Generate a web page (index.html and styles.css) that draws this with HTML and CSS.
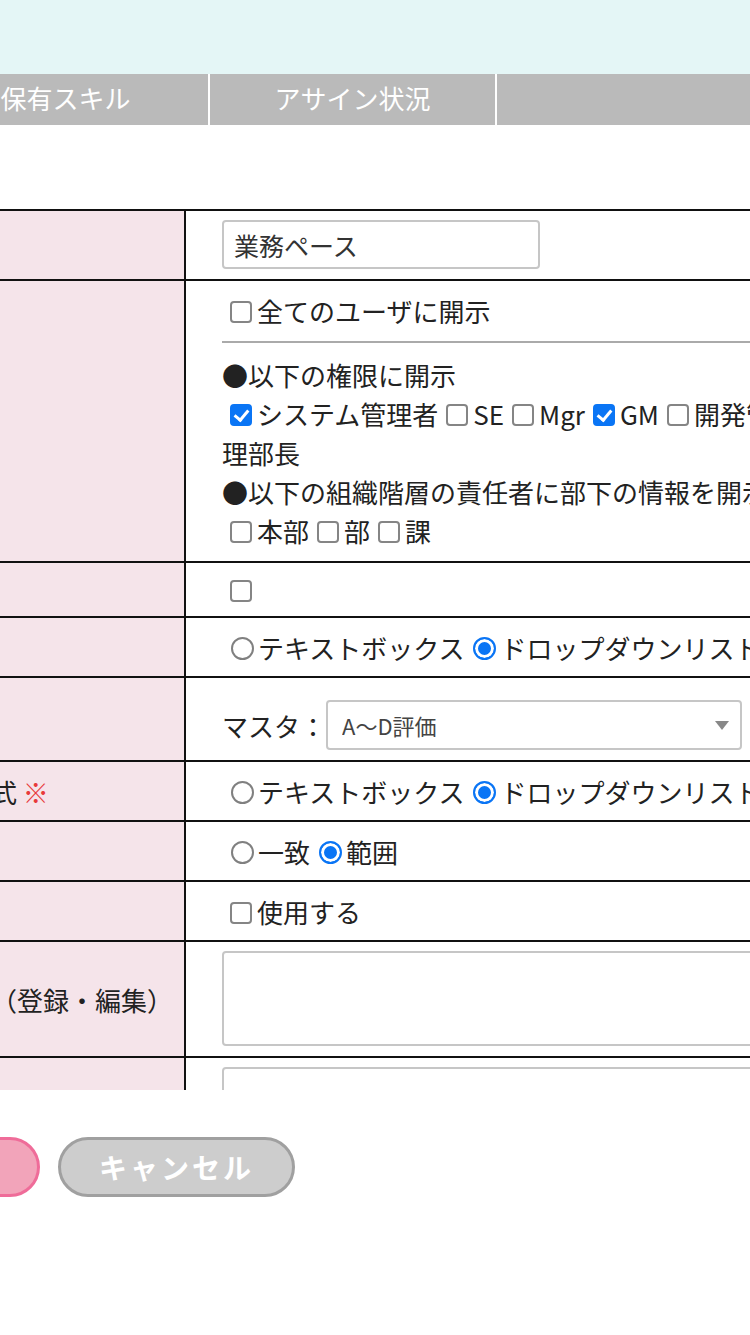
FILE: index.html
```html
<!DOCTYPE html>
<html lang="ja">
<head>
<meta charset="utf-8">
<title>項目設定</title>
<link rel="stylesheet" href="styles.css">
</head>
<body>
<div class="band"></div>
<div class="viewport">
  <div class="page">
    <nav class="tabs">
      <div class="tab">基本情報</div>
      <div class="tab">保有スキル</div>
      <div class="tab">アサイン状況</div>
      <div class="tab"></div>
    </nav>
    <div class="table-wrap">
      <table class="form">
        <colgroup><col class="c-label"><col class="c-value"></colgroup>
        <tr class="r-input">
          <th>項目名</th>
          <td><input class="text" type="text" value="業務ペース"></td>
        </tr>
        <tr class="r-open">
          <th>開示先</th>
          <td>
            <label><input type="checkbox">全てのユーザに開示</label>
            <hr class="sep">
            <div>●以下の権限に開示</div>
            <div><label><input type="checkbox" checked>システム管理者</label><label><input type="checkbox">SE</label><label><input type="checkbox">Mgr</label><label><input type="checkbox" checked>GM</label><label><input type="checkbox">開発管理部長</label></div>
            <div>●以下の組織階層の責任者に部下の情報を開示</div>
            <div><label><input type="checkbox">本部</label><label><input type="checkbox">部</label><label><input type="checkbox">課</label></div>
          </td>
        </tr>
        <tr class="r-check">
          <th>必須</th>
          <td><input type="checkbox"></td>
        </tr>
        <tr>
          <th>入力欄</th>
          <td><label><input type="radio" name="t1">テキストボックス</label><label><input type="radio" name="t1" checked>ドロップダウンリスト</label></td>
        </tr>
        <tr class="r-select">
          <th>選択肢</th>
          <td>
            <div class="master">
              <span>マスタ：</span>
              <span class="select-box"><select class="select"><option>A～D評価</option></select></span>
            </div>
          </td>
        </tr>
        <tr>
          <th>入力形式 <span class="req">※</span></th>
          <td><label><input type="radio" name="t2">テキストボックス</label><label><input type="radio" name="t2" checked>ドロップダウンリスト</label></td>
        </tr>
        <tr>
          <th>検索</th>
          <td><label><input type="radio" name="t3">一致</label><label><input type="radio" name="t3" checked>範囲</label></td>
        </tr>
        <tr>
          <th>集計</th>
          <td><label><input type="checkbox">使用する</label></td>
        </tr>
        <tr class="r-area">
          <th>説明文（登録・編集）</th>
          <td><textarea class="area"></textarea></td>
        </tr>
        <tr class="r-area">
          <th>備考</th>
          <td><textarea class="area"></textarea></td>
        </tr>
      </table>
    </div>
    <div class="buttons">
      <button class="btn btn-primary" type="button">登録</button>
      <button class="btn btn-cancel" type="button">キャンセル</button>
    </div>
  </div>
</div>
</body>
</html>
```
FILE: styles.css
```css
html, body {
  margin: 0;
  padding: 0;
  background: #fff;
}
body {
  width: 750px;
  overflow: hidden;
  font-family: "Noto Sans CJK JP", "Noto Sans", sans-serif;
  color: #222;
}
.band {
  height: 74px;
  background: #e4f6f6;
}
.viewport {
  width: 750px;
  overflow: hidden;
}
.page {
  margin-left: -364px;
  width: 1200px;
}
.tabs {
  display: flex;
  gap: 2px;
  background: #fff;
}
.tab {
  flex: none;
  width: 285px;
  height: 51px;
  background: #bababa;
  color: #fff;
  font-size: 26px;
  line-height: 1;
  display: flex;
  align-items: center;
  justify-content: center;
  padding-bottom: 3px;
  box-sizing: border-box;
}
.table-wrap {
  margin-left: 249px;
  margin-top: 84px;
  height: 881px;
  width: 933px;
  overflow: hidden;
}
.form {
  border-collapse: separate;
  border-spacing: 0;
  table-layout: fixed;
  width: 933px;
  border-top: 2px solid #111;
}
.c-label { width: 301px; }
.form th {
  box-sizing: border-box;
  background: #f5e4ea;
  border-right: 2px solid #111;
  border-bottom: 2px solid #111;
  text-align: left;
  padding: 0 0 0 28px;
  font-weight: normal;
  font-size: 26px;
  white-space: nowrap;
  vertical-align: middle;
  color: #222;
}
.req {
  color: #e83a3a;
}
.form td {
  border-bottom: 2px solid #111;
  padding: 10px 36px 9px;
  font-size: 26px;
  line-height: 39px;
  vertical-align: middle;
  color: #222;
}
.r-input td { padding: 9px 36px 10px; }
.r-open td { padding: 10px 36px 11px; }
.r-check td { padding: 9px 36px 9px; line-height: 35px; }
.r-select td { padding: 22px 36px 10px; }
.r-area td { padding: 9px 36px 10px; }

input[type="checkbox"] {
  appearance: none;
  -webkit-appearance: none;
  box-sizing: border-box;
  width: 22px;
  height: 22px;
  margin: 0 5px 0 8px;
  border: 2px solid #858585;
  border-radius: 4px;
  background: #fff;
  vertical-align: middle;
  position: relative;
  top: -3px;
}
input[type="checkbox"]:checked {
  background: #0a75f5;
  border-color: #0a75f5;
}
input[type="checkbox"]:checked::after {
  content: "";
  position: absolute;
  left: 5px;
  top: 1px;
  width: 6px;
  height: 11px;
  border: solid #fff;
  border-width: 0 3px 3px 0;
  transform: rotate(40deg);
}
input[type="radio"] {
  appearance: none;
  -webkit-appearance: none;
  box-sizing: border-box;
  width: 23px;
  height: 23px;
  margin: 0 4px 0 9px;
  border: 2px solid #808080;
  border-radius: 50%;
  background: #fff;
  vertical-align: middle;
  position: relative;
  top: -3px;
}
input[type="radio"]:checked {
  border-color: #0a75f5;
  background: #0a75f5;
  box-shadow: inset 0 0 0 3px #fff;
}
.sep {
  border: 0;
  border-top: 2px solid #aaa;
  margin: 11px 0 12px;
}
.text {
  display: block;
  box-sizing: border-box;
  width: 318px;
  height: 49px;
  border: 2px solid #c6c6c6;
  border-radius: 4px;
  padding: 0 10px;
  font-family: inherit;
  font-size: 25px;
  color: #333;
}
.master {
  display: flex;
  align-items: center;
  gap: 0;
}
.select-box {
  position: relative;
  display: block;
}
.select-box::after {
  content: "";
  position: absolute;
  right: 13px;
  top: 21px;
  border-left: 7px solid transparent;
  border-right: 7px solid transparent;
  border-top: 9px solid #888;
  pointer-events: none;
}
.select {
  display: block;
  appearance: none;
  -webkit-appearance: none;
  box-sizing: border-box;
  width: 416px;
  height: 50px;
  border: 2px solid #c6c6c6;
  border-radius: 4px;
  background: #fff;
  padding: 0 14px;
  font-family: inherit;
  font-size: 22px;
  color: #444;
}
.area {
  display: block;
  box-sizing: border-box;
  width: 100%;
  height: 95px;
  border: 2px solid #c6c6c6;
  border-radius: 4px;
  resize: none;
  font-family: inherit;
}
.buttons {
  display: flex;
  gap: 18px;
  margin-top: 47px;
  padding-left: 167px;
  padding-bottom: 140px;
}
.btn {
  flex: none;
  box-sizing: border-box;
  width: 237px;
  height: 60px;
  border-radius: 30px;
  border: 3px solid;
  font-family: "Noto Sans CJK JP", "Noto Sans", sans-serif;
  font-weight: bold;
  font-size: 28px;
  letter-spacing: 3px;
  color: #fff;
  padding: 0;
}
.btn-primary {
  background: #f2a4ba;
  border-color: #ef6c99;
}
.btn-cancel {
  background: #cdcdcd;
  border-color: #a0a0a0;
}
```
